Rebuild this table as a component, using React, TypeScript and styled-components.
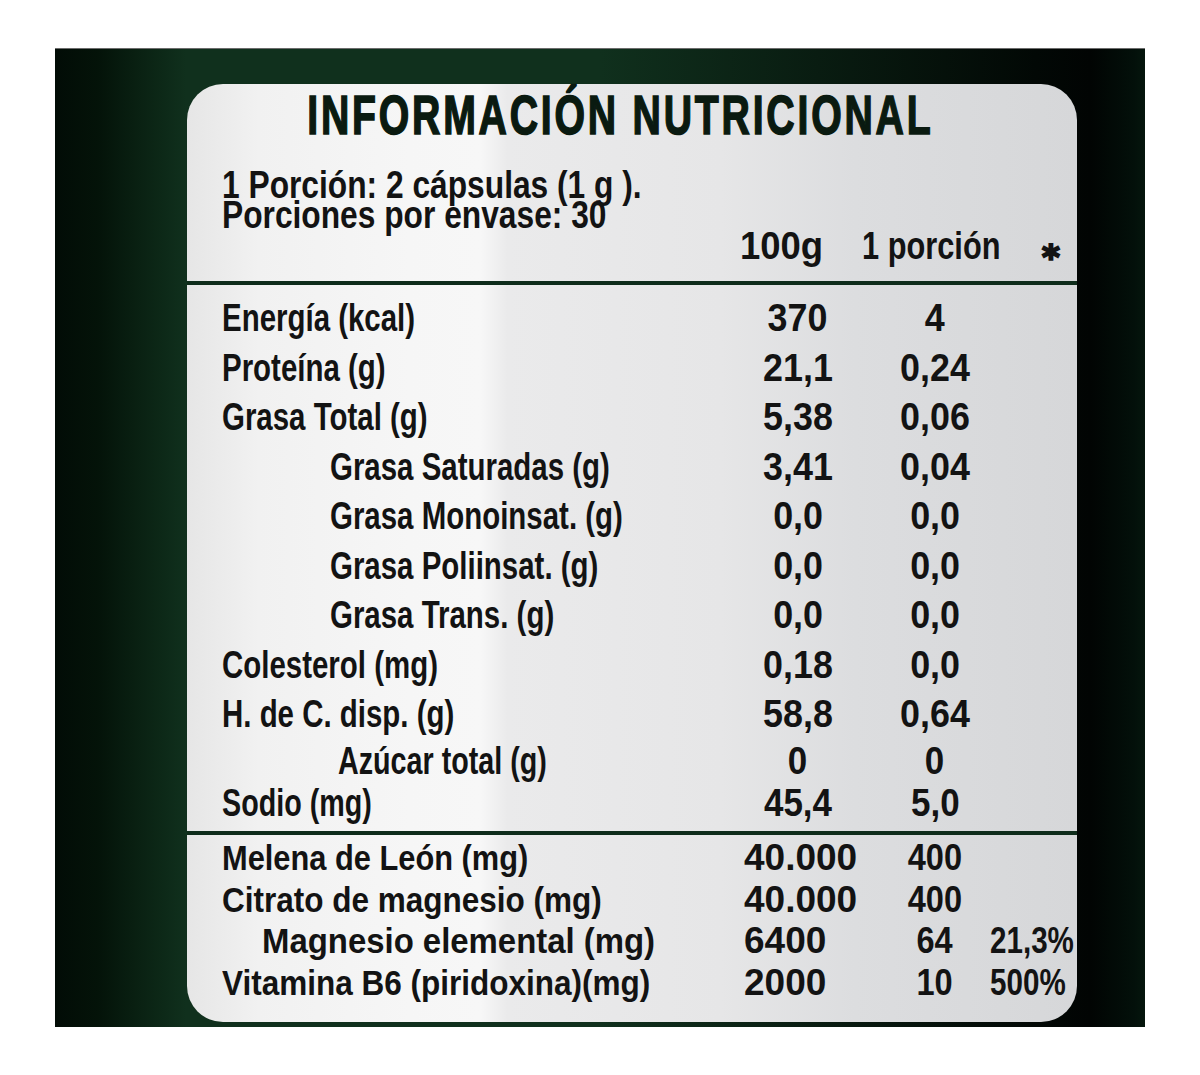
import styled, { createGlobalStyle } from "styled-components";

type Line = {
  label: string;
  indent?: number;
  v100: string;
  vPor: string;
  pct?: string;
  h?: number;
  size?: number;
  sx?: number;
};

const upper: Line[] = [
  { label: "Energía (kcal)", v100: "370", vPor: "4" },
  { label: "Proteína (g)", v100: "21,1", vPor: "0,24" },
  { label: "Grasa Total (g)", v100: "5,38", vPor: "0,06" },
  { label: "Grasa Saturadas (g)", indent: 108, v100: "3,41", vPor: "0,04" },
  { label: "Grasa Monoinsat. (g)", indent: 108, v100: "0,0", vPor: "0,0" },
  { label: "Grasa Poliinsat. (g)", indent: 108, v100: "0,0", vPor: "0,0" },
  { label: "Grasa Trans. (g)", indent: 108, v100: "0,0", vPor: "0,0" },
  { label: "Colesterol (mg)", v100: "0,18", vPor: "0,0" },
  { label: "H. de C. disp. (g)", v100: "58,8", vPor: "0,64" },
  { label: "Azúcar total (g)", indent: 116, v100: "0", vPor: "0", h: 44.7, size: 38 },
  { label: "Sodio (mg)", v100: "45,4", vPor: "5,0", h: 41.3, size: 38 },
];

const lower: Line[] = [
  { label: "Melena de León (mg)", v100: "40.000", vPor: "400", sx: 0.88 },
  { label: "Citrato de magnesio (mg)", v100: "40.000", vPor: "400", sx: 0.9 },
  {
    label: "Magnesio elemental (mg)",
    indent: 40,
    v100: "6400",
    vPor: "64",
    pct: "21,3%",
    sx: 0.94,
  },
  {
    label: "Vitamina B6 (piridoxina)(mg)",
    v100: "2000",
    vPor: "10",
    pct: "500%",
    sx: 0.9,
  },
];

export default function App() {
  return (
    <>
      <GlobalStyle />
      <Frame>
        <Label>
          <Title>
            <Txt $sx={0.7} $origin="center">INFORMACIÓN NUTRICIONAL</Txt>
          </Title>

          <Serving>
            <ServingText $sx={0.835}>
              1 Porción: 2 cápsulas (1 g ). Porciones por envase: 30
            </ServingText>
          </Serving>

          <HeadRow>
            <span />
            <span>
              <Txt $sx={0.96}>100g</Txt>
            </span>
            <span>
              <Txt $sx={0.81}>1 porción</Txt>
            </span>
            <Star>*</Star>
          </HeadRow>

          <Divider $mt={21} />

          <Section $mt={8}>
            {upper.map((r) => (
              <Row key={r.label} $h={r.h ?? 49.5}>
                <Name $indent={r.indent ?? 0} $size={r.size ?? 39}>
                  <Txt $sx={0.755}>{r.label}</Txt>
                </Name>
                <Per100 $align="center" $size={r.size ?? 39}>
                  <Txt $sx={0.92} $origin="center">
                    {r.v100}
                  </Txt>
                </Per100>
                <PerPortion $size={r.size ?? 39}>
                  <Txt $sx={0.92} $origin="center">
                    {r.vPor}
                  </Txt>
                </PerPortion>
              </Row>
            ))}
          </Section>

          <Divider $mt={7} />

          <Section $mt={2}>
            {lower.map((r) => (
              <Row key={r.label} $h={41.5}>
                <Name $indent={r.indent ?? 0} $size={35}>
                  <Txt $sx={r.sx ?? 0.9}>{r.label}</Txt>
                </Name>
                <Per100 $align="start" $size={37}>
                  <Txt $sx={1}>{r.v100}</Txt>
                </Per100>
                <PerPortion $size={37}>
                  <Txt $sx={0.88} $origin="center">
                    {r.vPor}
                  </Txt>
                </PerPortion>
                {r.pct && (
                  <Pct $size={37}>
                    <Txt $sx={0.8}>{r.pct}</Txt>
                  </Pct>
                )}
              </Row>
            ))}
          </Section>
        </Label>
      </Frame>
    </>
  );
}

const GlobalStyle = createGlobalStyle`
  html, body {
    margin: 0;
    padding: 0;
    background: #ffffff;
  }
  body {
    font-family: "Liberation Sans", Arial, sans-serif;
  }
`;

const Frame = styled.div`
  box-sizing: border-box;
  margin: 48px 0 0 55px;
  width: 1090px;
  height: 979px;
  padding: 35px 0 0 132px;
  overflow: hidden;
  border-top: 1px solid #6b6b6b;
  background: linear-gradient(
    90deg,
    #020c06 0%,
    #041309 4%,
    #0a2213 8%,
    #10301d 12%,
    #10301d 50%,
    #020805 90%,
    #010403 95%,
    #03100a 99%,
    #05160d 100%
  );
`;

const Label = styled.div`
  display: flex;
  flex-direction: column;
  width: 890px;
  height: 938px;
  border-radius: 36px;
  color: #131313;
  font-weight: 700;
  background: linear-gradient(
    90deg,
    #e6e6e6 0%,
    #f1f1f1 8%,
    #f6f6f6 25%,
    #f7f7f7 33%,
    #eaeaeb 36%,
    #e6e6e7 60%,
    #dcdddf 75%,
    #d6d7d9 100%
  );
`;

const Txt = styled.span<{ $sx: number; $origin?: string }>`
  display: inline-block;
  white-space: nowrap;
  transform: scaleX(${({ $sx }) => $sx});
  transform-origin: ${({ $origin }) => $origin ?? "left"} center;
`;

const ServingText = styled(Txt)`
  width: 512px;
  white-space: normal;
`;

const Title = styled.h1`
  display: flex;
  justify-content: center;
  margin: 0;
  padding: 3px 24px 0 0;
  font-size: 56px;
  line-height: 56px;
  font-weight: 700;
  letter-spacing: 4px;
  color: #0a1a10;
  -webkit-text-stroke: 1.6px #0a1a10;
`;

const Serving = styled.div`
  margin-top: 28px;
  padding-left: 35px;
  font-size: 38px;
  line-height: 29.5px;
`;

const HeadRow = styled.div`
  display: grid;
  grid-template-columns: 518px 122px 180px 1fr;
  margin-top: 2px;
  padding-left: 35px;
  font-size: 38px;
  line-height: 28px;
`;

const Star = styled.span`
  font-family: "DejaVu Sans", sans-serif;
  font-size: 34px;
  font-weight: 700;
  -webkit-text-stroke: 2px #131313;
  transform: translateY(11px);
`;

const Divider = styled.div<{ $mt: number }>`
  margin-top: ${({ $mt }) => $mt}px;
  height: 4px;
  background: #0e2c1b;
`;

const Section = styled.div<{ $mt: number }>`
  margin-top: ${({ $mt }) => $mt}px;
  padding-left: 35px;
`;

const Row = styled.div<{ $h: number }>`
  display: grid;
  grid-template-columns: 522px 108px 28px 110px 1fr;
  height: ${({ $h }) => $h}px;
  line-height: ${({ $h }) => $h}px;
`;

const Cell = styled.div<{ $size: number }>`
  font-size: ${({ $size }) => $size}px;
`;

const Name = styled(Cell)<{ $indent: number }>`
  grid-column: 1;
  padding-left: ${({ $indent }) => $indent}px;
`;

const Per100 = styled(Cell)<{ $align: "center" | "start" }>`
  grid-column: 2;
  justify-self: ${({ $align }) => $align};
`;

const PerPortion = styled(Cell)`
  grid-column: 4;
  justify-self: center;
`;

const Pct = styled(Cell)`
  grid-column: 5;
  justify-self: start;
`;
